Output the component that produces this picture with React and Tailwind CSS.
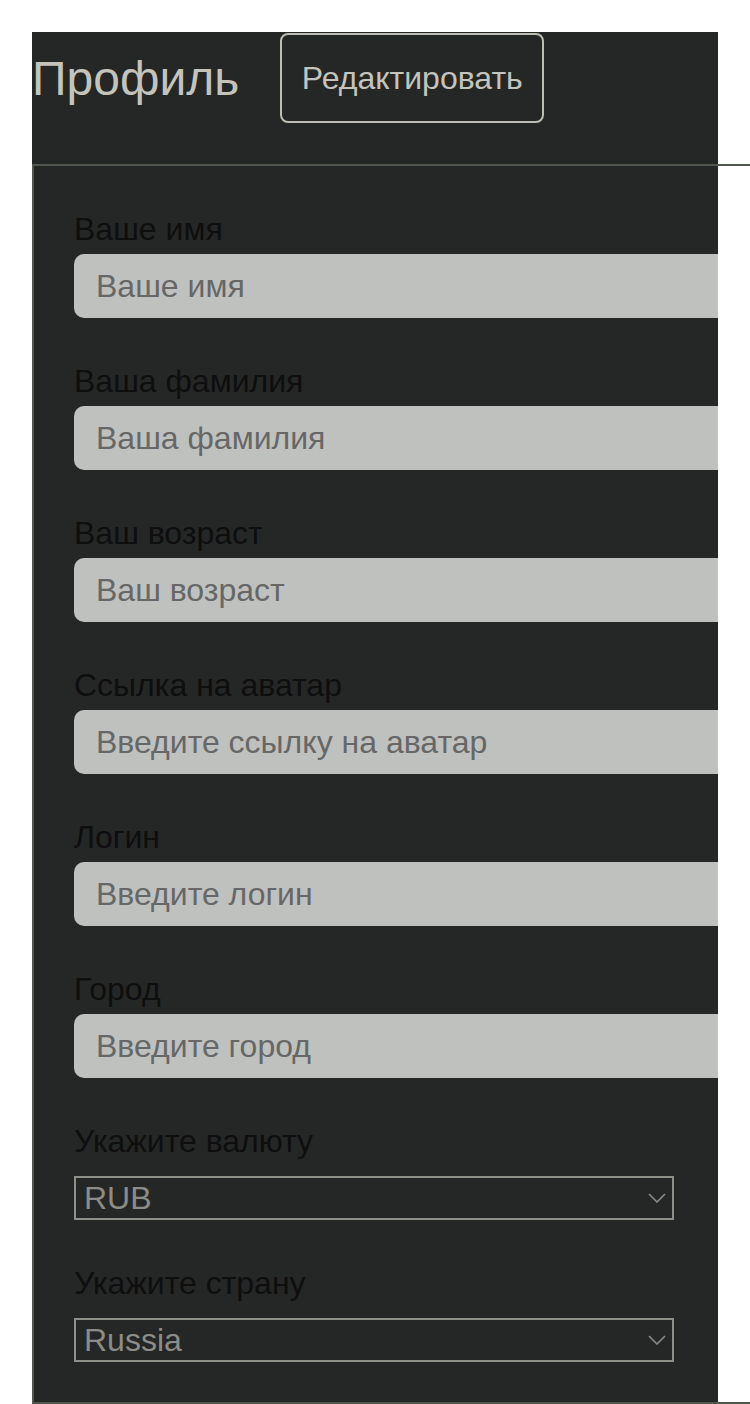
import { useState } from "react";

const fields = [
  { label: "Ваше имя", placeholder: "Ваше имя" },
  { label: "Ваша фамилия", placeholder: "Ваша фамилия" },
  { label: "Ваш возраст", placeholder: "Ваш возраст" },
  { label: "Ссылка на аватар", placeholder: "Введите ссылку на аватар" },
  { label: "Логин", placeholder: "Введите логин" },
  { label: "Город", placeholder: "Введите город" },
];

const Chevron = () => (
  <svg
    className="absolute right-[8px] top-1/2 -translate-y-1/2 pointer-events-none"
    width="18"
    height="10"
    viewBox="0 0 18 10"
    fill="none"
  >
    <path d="M1 1 L9 9 L17 1" stroke="#8a8a86" strokeWidth="1.6" />
  </svg>
);

const SelectField = ({ label, value, options, onChange }) => (
  <div className="pt-[45px]">
    <label className="block text-[32px] leading-[37px] text-[#0e0e0e] mb-[16px]">
      {label}
    </label>
    <div className="relative w-[600px]">
      <select
        className="appearance-none block w-full h-[44px] bg-transparent border-2 border-[#8e908a] rounded-none pl-[8px] text-[32px] leading-[37px] text-[#8c8c88] outline-none"
        value={value}
        onChange={(e) => onChange(e.target.value)}
      >
        {options.map((o) => (
          <option key={o} value={o}>
            {o}
          </option>
        ))}
      </select>
      <Chevron />
    </div>
  </div>
);

const App = () => {
  const [currency, setCurrency] = useState("RUB");
  const [country, setCountry] = useState("Russia");

  return (
    <div
      className="w-[750px] h-[1404px] overflow-hidden bg-white"
      style={{ fontFamily: '"Liberation Sans", Arial, sans-serif' }}
    >
      <div className="ml-[32px] mt-[32px] w-[686px] bg-[#252726]">
        <div className="flex items-center gap-[41px] h-[92px] mb-[40px]">
          <h1 className="text-[48px] leading-[55px] text-[#c4c4bc]">Профиль</h1>
          <button className="h-[90px] w-[264px] border-2 border-[#bdbdb3] rounded-[8px] text-[32px] leading-[37px] text-[#c4c4bc]">
            Редактировать
          </button>
        </div>
        <div className="w-[760px] border-t-2 border-l-2 border-b-2 border-[#4f574f] pl-[40px] pb-[40px]">
          {fields.map((f) => (
            <div key={f.label} className="pt-[45px]">
              <label className="block text-[32px] leading-[37px] text-[#0e0e0e] mb-[6px]">
                {f.label}
              </label>
              <input
                type="text"
                placeholder={f.placeholder}
                className="block w-[644px] h-[64px] bg-[#bfc1bf] rounded-l-[10px] pl-[22px] text-[32px] text-[#333] placeholder:text-[#666766] outline-none"
              />
            </div>
          ))}
          <SelectField
            label="Укажите валюту"
            value={currency}
            options={["RUB", "USD", "EUR"]}
            onChange={setCurrency}
          />
          <SelectField
            label="Укажите страну"
            value={country}
            options={["Russia", "Belarus", "Kazakhstan"]}
            onChange={setCountry}
          />
        </div>
      </div>
    </div>
  );
};

export default App;
